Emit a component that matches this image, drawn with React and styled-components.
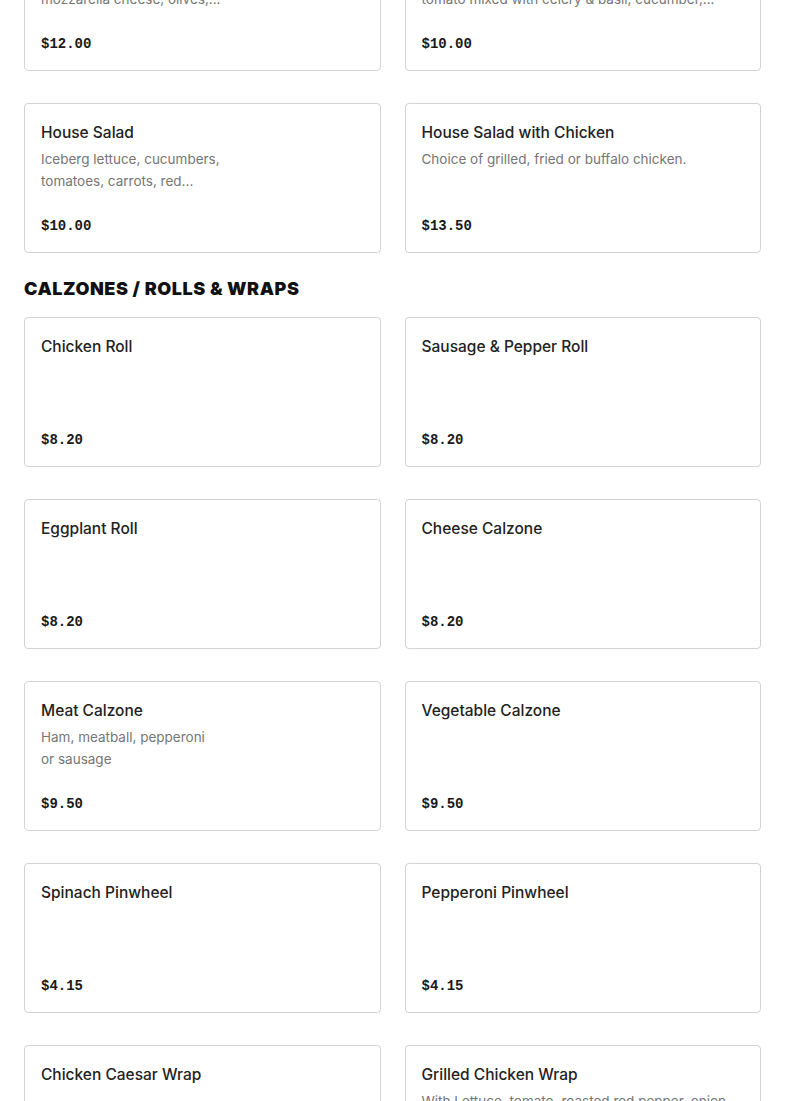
import React from 'react';
import styled, { createGlobalStyle } from 'styled-components';

const GlobalStyle = createGlobalStyle`
  html, body {
    margin: 0;
    padding: 0;
    background: #ffffff;
  }
  body {
    font-family: Inter, 'Liberation Sans', sans-serif;
    color: #2d2d2d;
    overflow: hidden;
  }
`;

const sections = [
  {
    title: null,
    items: [
      { name: 'Antipasto Salad', lines: ['Lettuce, tomatoes, ham, salami,', 'mozzarella cheese, olives,...'], price: '$12.00' },
      { name: 'Tomato Salad', lines: ['Fresh cut lettuce with', 'tomato mixed with celery & basil, cucumber,...'], price: '$10.00' },
      { name: 'House Salad', lines: ['Iceberg lettuce, cucumbers,', 'tomatoes, carrots, red...'], price: '$10.00' },
      { name: 'House Salad with Chicken', lines: ['Choice of grilled, fried or buffalo chicken.'], price: '$13.50' },
    ],
  },
  {
    title: 'CALZONES / ROLLS & WRAPS',
    items: [
      { name: 'Chicken Roll', lines: [], price: '$8.20' },
      { name: 'Sausage & Pepper Roll', lines: [], price: '$8.20' },
      { name: 'Eggplant Roll', lines: [], price: '$8.20' },
      { name: 'Cheese Calzone', lines: [], price: '$8.20' },
      { name: 'Meat Calzone', lines: ['Ham, meatball, pepperoni', 'or sausage'], price: '$9.50' },
      { name: 'Vegetable Calzone', lines: [], price: '$9.50' },
      { name: 'Spinach Pinwheel', lines: [], price: '$4.15' },
      { name: 'Pepperoni Pinwheel', lines: [], price: '$4.15' },
      { name: 'Chicken Caesar Wrap', lines: [], price: '$8.95' },
      { name: 'Grilled Chicken Wrap', lines: ['With Lettuce, tomato, roasted red pepper, onion', 'and mozzarella cheese.'], price: '$9.50' },
    ],
  },
];

const App = () => (
  <>
    <GlobalStyle />
    <Page>
      {sections.map((s, i) => (
        <Section key={i}>
          {s.title ? <SectionTitle>{s.title}</SectionTitle> : null}
          <Grid>
            {s.items.map((item, j) => (
              <Card key={j}>
                <ItemName>{item.name}</ItemName>
                {item.lines.length > 0
                  ? <Description>
                    {item.lines.map((l, k) => <DescLine key={k}>{l}</DescLine>)}
                  </Description>
                  : null}
                <Price>{item.price}</Price>
              </Card>
            ))}
          </Grid>
        </Section>
      ))}
    </Page>
  </>
);

const Page = styled.main`
  display: flex;
  flex-direction: column;
  gap: 24px;
  padding: 0 24px;
  margin-top: -79px;
`;

const Section = styled.section`
  display: flex;
  flex-direction: column;
`;

const SectionTitle = styled.h2`
  margin: 1px 0 17px;
  font-family: Inter, 'Liberation Sans', sans-serif;
  font-size: 18px;
  line-height: 22px;
  font-weight: 900;
  letter-spacing: 0.55px;
  color: #111111;
`;

const Grid = styled.div`
  display: grid;
  grid-template-columns: 1fr 1fr;
  column-gap: 24px;
  row-gap: 32px;
`;

const Card = styled.div`
  display: flex;
  flex-direction: column;
  box-sizing: border-box;
  height: 150px;
  padding: 17px 16px 14px;
  border: 1px solid #d3d3d3;
  border-radius: 4px;
  background: #ffffff;
`;

const ItemName = styled.div`
  font-size: 15.5px;
  line-height: 24px;
  font-weight: 500;
  color: #222222;
`;

const Description = styled.div`
  margin-top: 3px;
  font-size: 13.5px;
  line-height: 22px;
  color: #767676;
`;

const DescLine = styled.div`
  white-space: nowrap;
`;

const Price = styled.div`
  margin-top: auto;
  font-family: 'Liberation Mono', 'DejaVu Sans Mono', monospace;
  font-size: 14px;
  line-height: 24px;
  font-weight: 700;
  color: #191919;
`;

export default App;
